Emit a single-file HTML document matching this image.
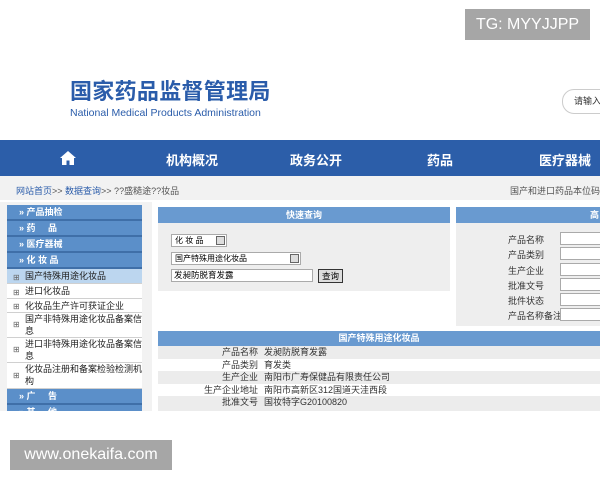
<!DOCTYPE html>
<html><head><meta charset="utf-8"><style>
*{margin:0;padding:0;box-sizing:border-box}
body{width:600px;height:480px;overflow:hidden;background:#fff;font-family:"Liberation Sans","Noto Sans CJK SC",sans-serif;position:relative}
.a{position:absolute}
.nav{left:0;top:140px;width:600px;height:36px;background:#2c5ea9}
.nav span{position:absolute;top:10px;color:#fff;font-size:13px;font-weight:bold;transform:translateX(-50%);white-space:nowrap}
.crumb{left:0;top:176px;width:600px;height:235px;background:#f2f2f2}
.sb{left:7px;width:135px;font-size:9px}
.h{background:#5b8fc9;color:#fff;font-weight:bold;border-bottom:2px solid #3f6fa8;height:16px;line-height:14px;padding-left:12px}
.i{background:#fff;color:#222;border-bottom:1px solid #d0d0d0;padding-left:18px;position:relative;line-height:12px}
.i:before{content:"⊞";position:absolute;left:6px;top:50%;margin-top:-6px;font-size:8px;color:#666}
.ph{background:#699ad0;color:#fff;font-size:9px;font-weight:bold;text-align:center;height:16px;line-height:16px}
.lbl{font-size:9px;color:#333}
.inp{background:#fff;border:1px solid #aaa;height:13px}
.row{position:absolute;left:158px;width:442px;height:12.6px;font-size:9px;line-height:12.6px;color:#333}
.row b{font-weight:normal;position:absolute;right:342px}
.row i{font-style:normal;position:absolute;left:106px}
</style></head><body>
<div class="a" style="left:465px;top:9px;width:125px;height:31px;background:#a6a6a6;color:#fff;font-size:16px;line-height:31px;text-align:center">TG: MYYJJPP</div>
<div class="a" style="left:70px;top:80px;font-size:22px;line-height:24px;font-weight:bold;color:#2a5caa;letter-spacing:0.3px">国家药品监督管理局</div>
<div class="a" style="left:70px;top:107px;font-size:10.5px;line-height:12px;color:#2a5caa">National Medical Products Administration</div>
<div class="a" style="left:562px;top:89px;width:60px;height:25px;border:1px solid #ccc;border-radius:12px;font-size:9px;line-height:23px;padding-left:11px;color:#333">请输入</div>
<div class="a nav">
<svg style="position:absolute;left:60px;top:11px" width="16" height="14" viewBox="0 0 16 14"><path d="M8 0L0 7h2v7h4.5V9.5h3V14H14V7h2z" fill="#fff"/></svg>
<span style="left:192px">机构概况</span><span style="left:316px">政务公开</span><span style="left:440px">药品</span><span style="left:565px">医疗器械</span></div>
<div class="a crumb"></div>
<div class="a" style="left:16px;top:184px;font-size:9px;color:#555"><span style="color:#2a5caa">网站首页</span>&gt;&gt; <span style="color:#2a5caa">数据查询</span>&gt;&gt; ??盛糙途??妆品</div>
<div class="a" style="left:510px;top:184px;font-size:9px;color:#555;white-space:nowrap">国产和进口药品本位码查</div>
<div class="a" style="left:0;top:200px;width:600px;height:2px;background:#fff"></div>
<div class="a" style="left:152px;top:202px;width:448px;height:209px;background:#fff"></div>
<div class="a sb" style="top:205px">
<div class="h">» 产品抽检</div><div class="h">» 药&nbsp;&nbsp;&nbsp;&nbsp;&nbsp;品</div><div class="h">» 医疗器械</div><div class="h">» 化 妆 品</div>
<div class="i" style="background:#bcd6ef;height:15px;line-height:15px">国产特殊用途化妆品</div>
<div class="i" style="height:15px;line-height:15px">进口化妆品</div>
<div class="i" style="height:14px;line-height:14px">化妆品生产许可获证企业</div>
<div class="i" style="height:25px;padding-top:0">国产非特殊用途化妆品备案信息</div>
<div class="i" style="height:25px">进口非特殊用途化妆品备案信息</div>
<div class="i" style="height:26px">化妆品注册和备案检验检测机构</div>
<div class="h">» 广&nbsp;&nbsp;&nbsp;&nbsp;&nbsp;告</div><div class="h">» 其&nbsp;&nbsp;&nbsp;&nbsp;&nbsp;他</div>
</div>
<div class="a" style="left:0;top:411px;width:600px;height:69px;background:#fff"></div>
<div class="a" style="left:158px;top:207px;width:292px;height:84px;background:#eee"><div class="ph">快速查询</div></div>
<div class="a inp" style="left:171px;top:234px;width:56px;font-size:8px;line-height:11px;padding-left:3px">化 妆 品 <span style="float:right;background:#ddd;border:1px solid #666;width:9px;height:9px;margin:1px"></span></div>
<div class="a inp" style="left:171px;top:252px;width:130px;font-size:8px;line-height:11px;padding-left:3px">国产特殊用途化妆品<span style="float:right;background:#ddd;border:1px solid #666;width:9px;height:9px;margin:1px"></span></div>
<div class="a inp" style="left:171px;top:269px;width:142px;font-size:8.5px;line-height:11px;padding-left:2px">发昶防脱育发露</div>
<div class="a" style="left:318px;top:269px;width:25px;height:14px;background:#ddd;border:1px solid #333;font-size:8.5px;text-align:center;line-height:12px">查询</div>
<div class="a" style="left:456px;top:207px;width:144px;height:119px;background:#eee"><div class="ph" style="text-align:left;padding-left:134px">高</div></div>
<div class="a lbl" style="left:508px;top:233px;line-height:15.3px">产品名称<br>产品类别<br>生产企业<br>批准文号<br>批件状态<br>产品名称备注</div>
<div class="a" style="left:560px;top:232px">
<div class="inp" style="width:45px;margin-bottom:2.3px"></div><div class="inp" style="width:45px;margin-bottom:2.3px"></div><div class="inp" style="width:45px;margin-bottom:2.3px"></div><div class="inp" style="width:45px;margin-bottom:2.3px"></div><div class="inp" style="width:45px;margin-bottom:2.3px"></div><div class="inp" style="width:45px"></div></div>
<div class="a ph" style="left:158px;top:331px;width:442px;height:15px;line-height:15px">国产特殊用途化妆品</div>
<div class="row" style="top:346px;background:#ececec"><b>产品名称</b><i>发昶防脱育发露</i></div>
<div class="row" style="top:358.6px"><b>产品类别</b><i>育发类</i></div>
<div class="row" style="top:371.2px;background:#ececec"><b>生产企业</b><i>南阳市广寿保健品有限责任公司</i></div>
<div class="row" style="top:383.8px"><b>生产企业地址</b><i>南阳市高新区312国道天洼西段</i></div>
<div class="row" style="top:396.4px;background:#ececec;height:14.6px"><b>批准文号</b><i>国妆特字G20100820</i></div>
<div class="a" style="left:0;top:411px;width:600px;height:69px;background:#fff"></div>
<div class="a" style="left:10px;top:440px;width:162px;height:30px;background:#a6a6a6;color:#fff;font-size:16px;line-height:30px;text-align:center">www.onekaifa.com</div>
</body></html>
